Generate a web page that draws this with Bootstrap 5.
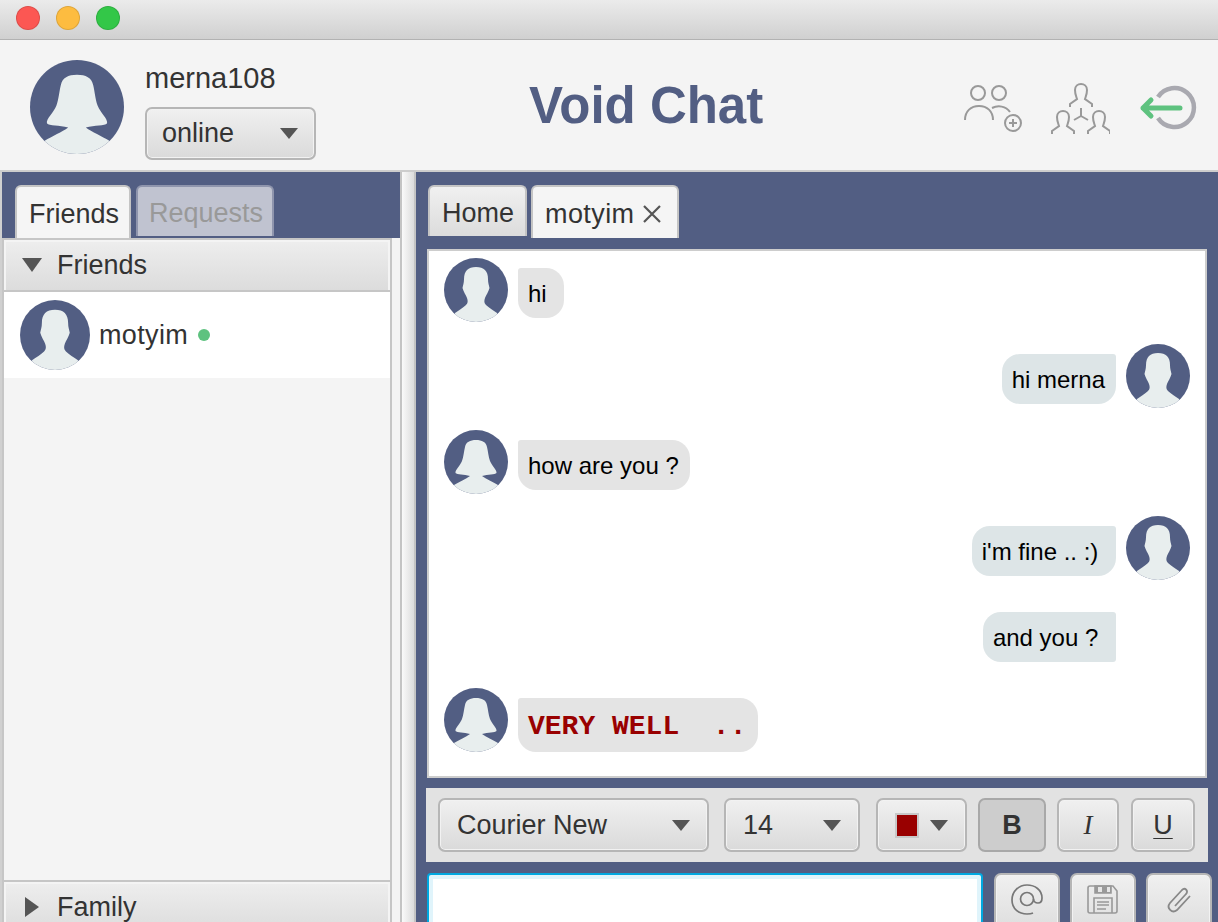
<!DOCTYPE html>
<html lang="en">
<head>
  <meta charset="UTF-8">
  <title>Void Chat</title>
  <link rel="stylesheet" href="https://cdn.jsdelivr.net/npm/bootstrap@5.3.0/dist/css/bootstrap.min.css">
  <style>
    html, body { height: 922px; overflow: hidden; }
    body { background: #f4f4f4; color: #333; font-family: "Liberation Sans", Arial, sans-serif; font-size: 27px; }

    .titlebar { height: 40px; padding-left: 16px; gap: 16px; background: linear-gradient(#ebebeb, #d0d0d0); border-bottom: 1px solid #b2b2b2; }
    .light { width: 24px; height: 24px; border-radius: 50%; border: 1px solid rgba(0,0,0,.12); margin-top: -3px; }
    .light-red { background: #fc5753; }
    .light-amber { background: #fdbc40; }
    .light-green { background: #33c748; }

    .topbar { height: 132px; background: #f4f4f4; border-bottom: 2px solid #cdcdcd; padding: 0 20px 0 30px; }
    .me-block { width: 499px; gap: 21px; padding-top: 4px; }
    .me-avatar { width: 94px; height: 94px; }
    .me-info { margin-top: 9px; }
    .me-name { font-size: 29px; line-height: 30px; margin-bottom: 14px; }
    .app-title { font-size: 51px; font-weight: 700; color: #525e83; line-height: 1; }
    .tool-icons { gap: 28px; }

    .btn.fx { --bs-btn-padding-y: 0; display: flex; align-items: center; height: 54px; padding: 0 17px; font-size: 27px; color: #333; border: 2px solid #b6b6b6; border-radius: 7px; background: linear-gradient(#f0f0f0, #dadada); box-shadow: inset 0 0 0 1px #f2f2f2; }
    .btn.fx-on { background: #cdcdcd; border-color: #a8a8a8; box-shadow: none; font-weight: 700; }
    .caret-down { width: 0; height: 0; margin-left: auto; border-left: 9px solid transparent; border-right: 9px solid transparent; border-top: 11px solid #555; }
    .btn.status-combo { width: 171px; height: 53px; padding: 0 16px 0 15px; }

    .main-split { height: 750px; }
    .left-pane { width: 400px; flex: none; border-left: 2px solid #d0d0d0; }
    .tab-strip { background: #525e83; flex: none; }
    .left-pane .tab-strip { height: 66px; padding: 13px 0 0 13px; gap: 5px; }
    .tab-item { display: flex; align-items: center; padding: 3px 10px 0 12px; height: 51px; border: 2px solid #c4c4c4; border-bottom: 0; border-radius: 6px 6px 0 0; background: linear-gradient(#f0f0f0, #dcdcdc); color: #333; }
    .tab-active { height: 53px; background: #f5f5f5; }
    .tab-off { padding: 3px 9px 0 11px; background: #c0c3d0; border-color: #8f95ad; color: #999; }

    .friends-box { width: 390px; flex-grow: 1; min-height: 0; overflow: hidden; background: #f4f4f4; border-left: 2px solid #c6c6c6; border-right: 2px solid #c6c6c6; }
    .fold-head { height: 54px; flex: none; padding-left: 18px; gap: 15px; border-top: 2px solid #c6c6c6; border-bottom: 2px solid #c6c6c6; background: linear-gradient(#eeeeee, #dcdcdc); box-shadow: inset 2px 2px 0 #f4f4f4, inset -2px 0 0 #f4f4f4; }
    .fold-last { margin-bottom: -12px; }
    .caret-open { width: 0; height: 0; border-left: 10px solid transparent; border-right: 10px solid transparent; border-top: 14px solid #555; }
    .caret-shut { width: 0; height: 0; margin-left: 3px; margin-right: 3px; border-top: 10px solid transparent; border-bottom: 10px solid transparent; border-left: 14px solid #555; }
    .friend-row { height: 86px; background: #fff; padding-left: 16px; gap: 9px; letter-spacing: .35px; }
    .friend-avatar { width: 70px; height: 70px; }
    .dot-on { width: 12px; height: 12px; margin-left: 1px; border-radius: 50%; background: #5ec27f; }

    .splitter { width: 16px; flex: none; border-left: 2px solid #c4c4c4; border-right: 2px solid #c4c4c4; background: linear-gradient(90deg, #fafafa, #dcdcdc); }
    .right-pane { flex-grow: 1; min-width: 0; background: #525e83; padding-left: 10px; }
    .right-pane .tab-strip { height: 66px; padding: 13px 0 0 2px; gap: 4px; }
    .tab-home { padding-right: 11px; }
    .tab-chat { padding-right: 15px; letter-spacing: .4px; }
    .tab-close { margin-left: 8px; }

    .chat-box { width: 780px; height: 529px; margin: 11px 0 0 1px; padding: 7px 15px; gap: 22px; background: #fff; border: 2px solid #cdcdcd; color: #000; font-size: 24px; }
    .msg-row { min-height: 64px; gap: 10px; }
    .msg-avatar { width: 64px; height: 64px; flex: none; }
    .msg-solo { margin-right: 74px; }
    .bubble { height: 50px; margin-top: 10px; padding: 0 11px 0 10px; line-height: 52px; white-space: pre; }
    .bubble-in { background: #e4e4e4; border-radius: 3px 18px 18px 18px; }
    .bubble-out { background: #dde5e7; border-radius: 18px 3px 18px 18px; }
    .bubble-next { border-radius: 18px 3px 3px 18px; }
    .bubble-mono { height: 54px; padding-right: 12px; color: #990000; font: 700 28px/57px "Liberation Mono", "Courier New", monospace; }

    .format-bar { width: 782px; height: 74px; margin-top: 10px; padding: 10px 12px; background: #e2e2e2; }
    .combo-font { width: 271px; }
    .combo-size { width: 136px; margin-left: 15px; }
    .combo-color { width: 91px; margin-left: 16px; }
    .swatch { width: 24px; height: 25px; background: #990000; border: 2px solid #c8c8c8; }
    .btn.fx-sq { justify-content: center; padding: 0; }
    .btn-b { width: 68px; margin-left: 11px; }
    .btn-i { width: 62px; margin-left: 11px; font-family: "Liberation Serif", serif; font-style: italic; }
    .btn-u { width: 64px; margin-left: 12px; text-decoration: underline; text-underline-offset: 4px; text-decoration-thickness: 1px; }

    .send-row { margin-top: 11px; margin-left: 1px; gap: 10px; }
    .send-input { width: 556px; height: 70px; flex: none; margin-right: 1px; border: 2px solid #00a8e0; border-radius: 4px; background: #fff; box-shadow: inset 0 0 0 4px #e0f4fb; }
    .btn.fx-send { width: 66px; height: 70px; flex: none; justify-content: center; align-items: flex-start; padding: 7px 0 0; }
  </style>
</head>
<body>
  <!-- avatars are reused all over, so keep them as symbols -->
  <svg width="0" height="0" class="position-absolute">
    <defs>
      <clipPath id="roundClip"><circle cx="32" cy="32" r="32"/></clipPath>
      <symbol id="avatarFemale" viewBox="0 0 64 64">
        <g clip-path="url(#roundClip)">
          <rect width="64" height="64" fill="#525e83"/>
          <path fill="#e8eeee" d="M32 10C26 10 22 12 21 17C20 21 19.5 27 18 31C16 36 11 40 11.5 43C13 45 20 44 26 46C22 49 15 52 10 55L10 64L54 64L54 55C49 52 42 49 38 46C44 44 51 45 52.500 43C53 40 48 36 46 31C44.500 27 44 21 43 17C42 12 38 10 32 10Z"/>
        </g>
      </symbol>
      <symbol id="avatarMale" viewBox="0 0 64 64">
        <g clip-path="url(#roundClip)">
          <rect width="64" height="64" fill="#525e83"/>
          <path fill="#e8eeee" d="M32 9C24 9 20 13 20 21C20 25 19 27 18.500 30C19.500 34 22 37 23 40C24 43 24 45 22 47C19 50 15 52 11 55L11 64L53 64L53 55C49 52 45 50 42 47C40 45 40 43 41 40C42 37 44.500 34 45.500 30C45 27 44 25 44 21C44 13 40 9 32 9Z"/>
        </g>
      </symbol>
    </defs>
  </svg>

  <div class="titlebar d-flex align-items-center">
    <span class="light light-red"></span>
    <span class="light light-amber"></span>
    <span class="light light-green"></span>
  </div>

  <header class="topbar d-flex align-items-center">
    <div class="me-block d-flex align-items-center">
      <svg class="me-avatar"><use href="#avatarFemale"/></svg>
      <div class="me-info">
        <div class="me-name">merna108</div>
        <button class="btn fx status-combo">online<span class="caret-down"></span></button>
      </div>
    </div>
    <div class="app-title">Void Chat</div>
    <div class="tool-icons d-flex ms-auto">
      <svg width="60" height="70" viewBox="962 70 60 70" fill="none" stroke="#999" stroke-width="2">
        <circle cx="978" cy="93" r="7"/>
        <circle cx="999" cy="93" r="7"/>
        <path d="M965 120C965 111 971 106 979 106C987 106 993 111 993 120"/>
        <path d="M992 108C998 105 1006 106 1010 112"/>
        <circle cx="1013" cy="123" r="8"/>
        <path d="M1009 123H1017M1013 119V127"/>
      </svg>
      <svg width="60" height="70" viewBox="1050 70 60 70" fill="none" stroke="#999" stroke-width="2">
        <path d="M1070 107V104L1077 99C1076 96 1075 94 1075 90C1075 86 1078 84 1081 84C1084 84 1087 86 1087 90C1087 94 1086 96 1085 99L1092 104V107"/>
        <path d="M1052 134V131L1059 126C1058 123 1057 121 1057 117C1057 113 1060 111 1063 111C1066 111 1069 113 1069 117C1069 121 1068 123 1067 126L1074 131V134"/>
        <path d="M1088 134V131L1095 126C1094 123 1093 121 1093 117C1093 113 1096 111 1099 111C1102 111 1105 113 1105 117C1105 121 1104 123 1103 126L1110 131V134"/>
        <path d="M1081 108V116M1081 116L1074 120M1081 116L1088 120"/>
      </svg>
      <svg width="60" height="70" viewBox="1138 70 60 70" fill="none">
        <path d="M1158 97A19.5 19.5 0 1 1 1158 118" stroke="#a9a9b0" stroke-width="4.5"/>
        <path d="M1180 108H1143M1151 100L1143 108L1151 116" stroke="#5ec27f" stroke-width="5" stroke-linecap="round" stroke-linejoin="round"/>
      </svg>
    </div>
  </header>

  <div class="main-split d-flex">
    <aside class="left-pane d-flex flex-column">
      <div class="tab-strip d-flex align-items-start">
        <div class="tab-item tab-active">Friends</div>
        <div class="tab-item tab-off">Requests</div>
      </div>
      <div class="friends-box d-flex flex-column">
        <div class="fold-head d-flex align-items-center"><span class="caret-open"></span>Friends</div>
        <div class="friend-row d-flex align-items-center">
          <svg class="friend-avatar"><use href="#avatarMale"/></svg>
          <span>motyim</span>
          <span class="dot-on"></span>
        </div>
        <div class="flex-grow-1"></div>
        <div class="fold-head fold-last d-flex align-items-center"><span class="caret-shut"></span>Family</div>
      </div>
    </aside>

    <div class="splitter"></div>

    <section class="right-pane">
      <div class="tab-strip d-flex align-items-start">
        <div class="tab-item tab-home">Home</div>
        <div class="tab-item tab-active tab-chat">motyim
          <svg class="tab-close" width="20" height="18" viewBox="0 0 20 18" stroke="#555" stroke-width="2.2"><path d="M2 1L18 17M18 1L2 17"/></svg>
        </div>
      </div>

      <div class="chat-box d-flex flex-column">
        <div class="msg-row d-flex">
          <svg class="msg-avatar"><use href="#avatarMale"/></svg>
          <div class="bubble bubble-in">hi </div>
        </div>
        <div class="msg-row d-flex justify-content-end">
          <div class="bubble bubble-out">hi merna</div>
          <svg class="msg-avatar"><use href="#avatarMale"/></svg>
        </div>
        <div class="msg-row d-flex">
          <svg class="msg-avatar"><use href="#avatarFemale"/></svg>
          <div class="bubble bubble-in">how are you ?</div>
        </div>
        <div class="msg-row d-flex justify-content-end">
          <div class="bubble bubble-out">i'm fine .. :) </div>
          <svg class="msg-avatar"><use href="#avatarMale"/></svg>
        </div>
        <div class="msg-row d-flex justify-content-end">
          <div class="bubble bubble-out bubble-next msg-solo">and you ? </div>
        </div>
        <div class="msg-row d-flex">
          <svg class="msg-avatar"><use href="#avatarFemale"/></svg>
          <div class="bubble bubble-in bubble-mono">VERY WELL  ..</div>
        </div>
      </div>

      <div class="format-bar d-flex">
        <button class="btn fx combo-font">Courier New<span class="caret-down"></span></button>
        <button class="btn fx combo-size">14<span class="caret-down"></span></button>
        <button class="btn fx combo-color"><span class="swatch"></span><span class="caret-down"></span></button>
        <button class="btn fx fx-sq fx-on btn-b">B</button>
        <button class="btn fx fx-sq btn-i">I</button>
        <button class="btn fx fx-sq btn-u">U</button>
      </div>

      <div class="send-row d-flex">
        <div class="send-input"></div>
        <button class="btn fx fx-send">
          <svg width="36" height="36" viewBox="0 0 36 36" fill="none" stroke="#777" stroke-width="1.7"><circle cx="18" cy="17" r="6.5"/><path d="M24.5 17C25 22 33 23 33 16C33 8 26 3 18 3C10 3 3 9 3 18C3 27 10 32 18 32C20 32 22 32 24 31"/></svg>
        </button>
        <button class="btn fx fx-send">
          <svg width="36" height="36" viewBox="0 0 36 36" fill="none" stroke="#999" stroke-width="1.6"><path d="M5 4H28L32 9V29C32 30 31 31 30 31H5C4 31 3 30 3 29V6C3 5 4 4 5 4Z"/><path fill="#999" d="M10 4H26V11H10Z"/><path fill="#e6e6e6" stroke="none" d="M13 5H17V10H13ZM22 5H25V10H22Z"/><path d="M9 31V16H27V31M12 20H24M12 23H24M12 27H21"/></svg>
        </button>
        <button class="btn fx fx-send">
          <svg width="36" height="36" viewBox="0 0 36 36" fill="none" stroke="#888" stroke-width="1.8"><path d="M14 24L25 12C28 9 24 5 21 8L9 21C5 26 11 32 16 28L29 14"/></svg>
        </button>
      </div>
    </section>
  </div>
</body>
</html>
